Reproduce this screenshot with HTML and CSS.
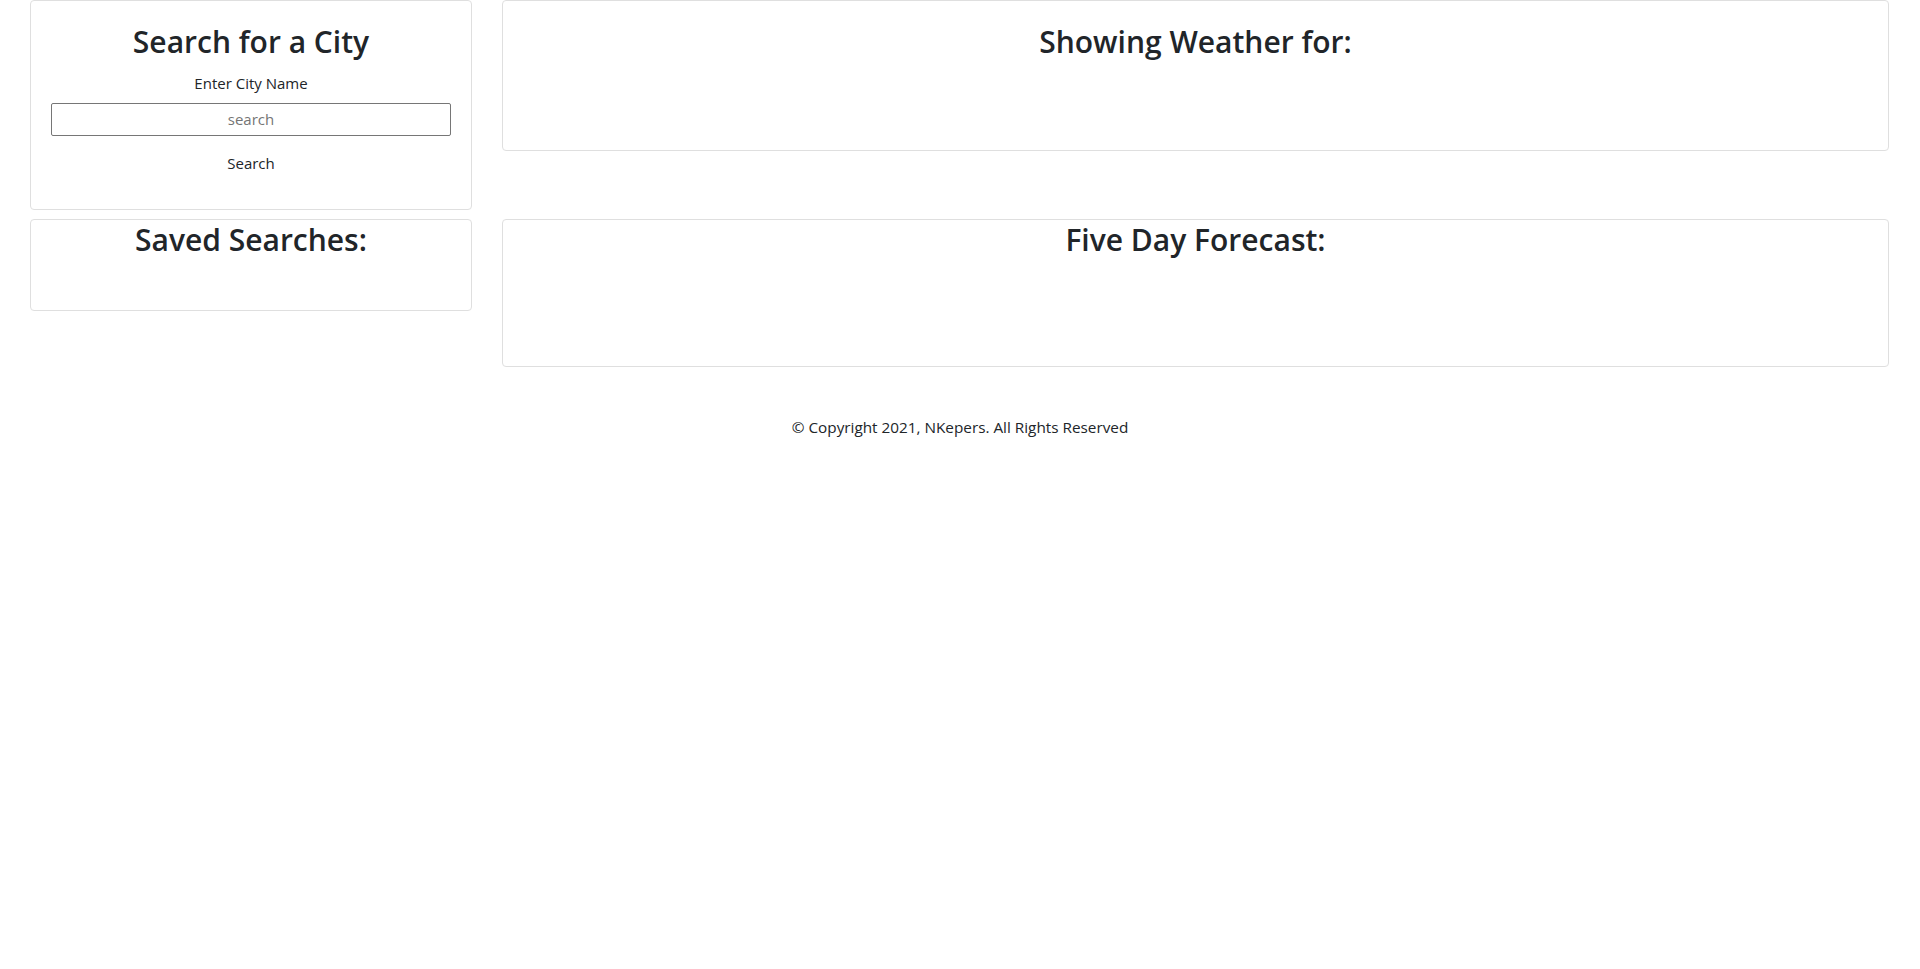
FILE: index.html
```html
<!DOCTYPE html>
<html lang="en">
<head>
<meta charset="utf-8">
<title>Weather Dashboard</title>
<link rel="stylesheet" href="styles.css">
</head>
<body>
<main class="layout">
  <section class="card card-search">
    <h2 class="card-title">Search for a City</h2>
    <label class="city-label" for="city">Enter City Name</label>
    <input class="city-input" id="city" type="text" placeholder="search">
    <button class="search-btn" type="button">Search</button>
  </section>
  <section class="card card-weather">
    <h2 class="card-title">Showing Weather for:</h2>
    <div class="weather-body"></div>
  </section>
  <section class="card card-saved">
    <h2 class="card-title">Saved Searches:</h2>
    <ul class="saved-list"></ul>
  </section>
  <section class="card card-forecast">
    <h2 class="card-title">Five Day Forecast:</h2>
    <div class="forecast-row"></div>
  </section>
</main>
<footer class="footer">© Copyright 2021, NKepers. All Rights Reserved</footer>
</body>
</html>
```
FILE: styles.css
```css
* { box-sizing: border-box; }
body {
  margin: 0;
  font-family: "Open Sans", "Noto Sans", sans-serif;
  font-size: 16px;
  line-height: 1.5;
  color: #212529;
  background: #fff;
}
.layout {
  display: grid;
  grid-template-columns: 442px 1387px;
  column-gap: 30px;
  row-gap: 9px;
  align-items: start;
  padding: 0 31px 0 30px;
}
.card {
  border: 1px solid #dfdfdf;
  border-radius: 4px;
  text-align: center;
  background: #fff;
}
.card-title {
  margin: 0;
  font-size: 30px;
  font-weight: 600;
  line-height: 1.2;
}
.card-search { padding: 23px 20px 29px; }
.card-weather { padding: 23px 20px 18px; }
.card-saved, .card-forecast { padding-top: 2px; }
.city-label {
  display: block;
  margin-top: 12px;
  font-size: 15px;
}
.city-input {
  display: block;
  width: 100%;
  height: 33px;
  margin-top: 8px;
  border: 1px solid #767676;
  border-radius: 2px;
  font-family: inherit;
  font-size: 15px;
  text-align: center;
  color: #212529;
}
.city-input::placeholder { color: #757575; }
.search-btn {
  margin-top: 10px;
  padding: 6px 12px;
  border: 0;
  background: transparent;
  font-family: inherit;
  font-size: 15px;
  line-height: 1.5;
  color: #212529;
}
.weather-body { min-height: 72px; }
.saved-list { margin: 0; padding: 0; min-height: 52px; list-style: none; }
.forecast-row { min-height: 108px; }
.footer {
  margin-top: 49px;
  text-align: center;
  font-size: 15.3px;
}
```
